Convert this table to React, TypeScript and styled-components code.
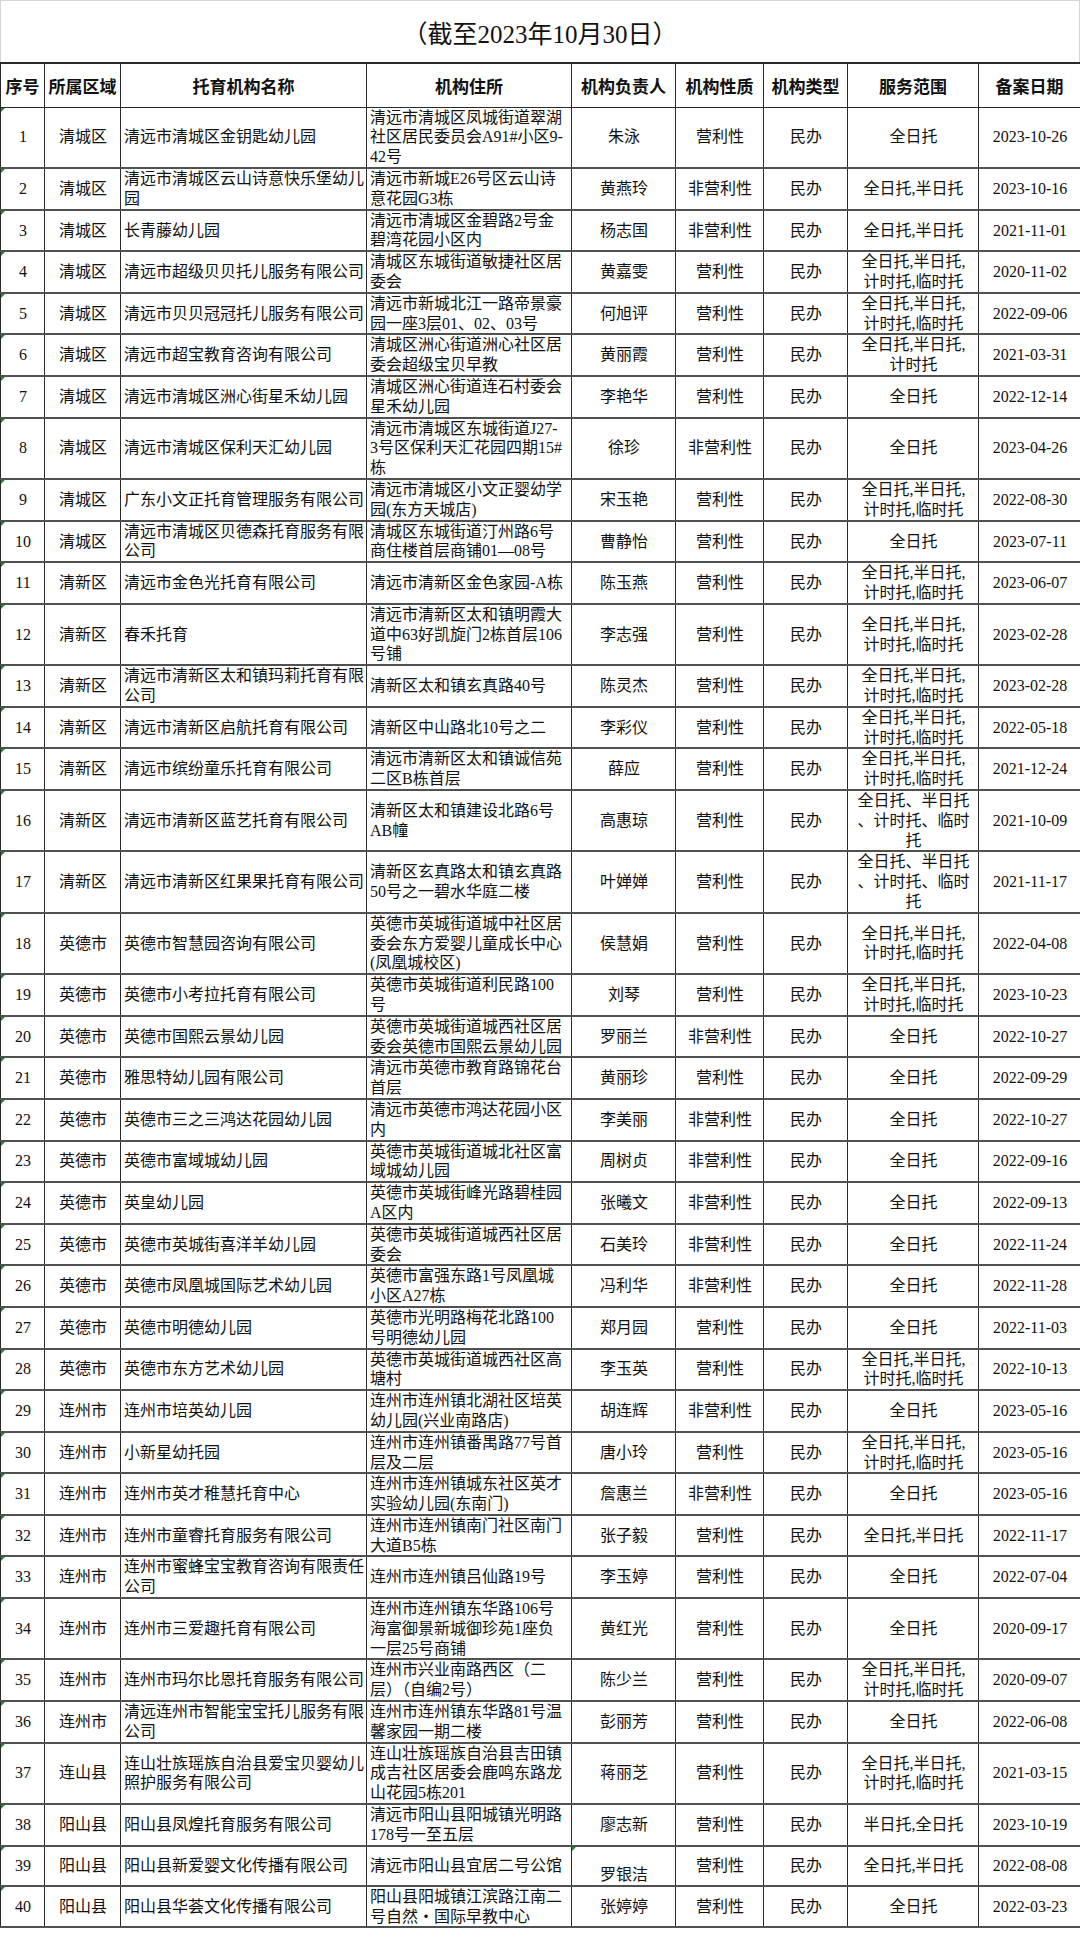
import React from 'react';
import styled, { createGlobalStyle } from 'styled-components';

type Row = [string, string, string, string, string, string, string, string, string];

const FULL = '全日托,半日托,\n计时托,临时托';
const HALF = '全日托,半日托';
const PAUSE = '全日托、半日托\n、计时托、临时\n托';

const rows: Row[] = [
    ['1', '清城区', '清远市清城区金钥匙幼儿园', '清远市清城区凤城街道翠湖\n社区居民委员会A91#小区9-\n42号', '朱泳', '营利性', '民办', '全日托', '2023-10-26'],
    ['2', '清城区', '清远市清城区云山诗意快乐堡幼儿\n园', '清远市新城E26号区云山诗\n意花园G3栋', '黄燕玲', '非营利性', '民办', HALF, '2023-10-16'],
    ['3', '清城区', '长青藤幼儿园', '清远市清城区金碧路2号金\n碧湾花园小区内', '杨志国', '非营利性', '民办', HALF, '2021-11-01'],
    ['4', '清城区', '清远市超级贝贝托儿服务有限公司', '清城区东城街道敏捷社区居\n委会', '黄嘉雯', '营利性', '民办', FULL, '2020-11-02'],
    ['5', '清城区', '清远市贝贝冠冠托儿服务有限公司', '清远市新城北江一路帝景豪\n园一座3层01、02、03号', '何旭评', '营利性', '民办', FULL, '2022-09-06'],
    ['6', '清城区', '清远市超宝教育咨询有限公司', '清城区洲心街道洲心社区居\n委会超级宝贝早教', '黄丽霞', '营利性', '民办', '全日托,半日托,\n计时托', '2021-03-31'],
    ['7', '清城区', '清远市清城区洲心街星禾幼儿园', '清城区洲心街道连石村委会\n星禾幼儿园', '李艳华', '营利性', '民办', '全日托', '2022-12-14'],
    ['8', '清城区', '清远市清城区保利天汇幼儿园', '清远市清城区东城街道J27-\n3号区保利天汇花园四期15#\n栋', '徐珍', '非营利性', '民办', '全日托', '2023-04-26'],
    ['9', '清城区', '广东小文正托育管理服务有限公司', '清远市清城区小文正婴幼学\n园(东方天城店)', '宋玉艳', '营利性', '民办', FULL, '2022-08-30'],
    ['10', '清城区', '清远市清城区贝德森托育服务有限\n公司', '清城区东城街道汀州路6号\n商住楼首层商铺01—08号', '曹静怡', '营利性', '民办', '全日托', '2023-07-11'],
    ['11', '清新区', '清远市金色光托育有限公司', '清远市清新区金色家园-A栋', '陈玉燕', '营利性', '民办', FULL, '2023-06-07'],
    ['12', '清新区', '春禾托育', '清远市清新区太和镇明霞大\n道中63好凯旋门2栋首层106\n号铺', '李志强', '营利性', '民办', FULL, '2023-02-28'],
    ['13', '清新区', '清远市清新区太和镇玛莉托育有限\n公司', '清新区太和镇玄真路40号', '陈灵杰', '营利性', '民办', FULL, '2023-02-28'],
    ['14', '清新区', '清远市清新区启航托育有限公司', '清新区中山路北10号之二', '李彩仪', '营利性', '民办', FULL, '2022-05-18'],
    ['15', '清新区', '清远市缤纷童乐托育有限公司', '清远市清新区太和镇诚信苑\n二区B栋首层', '薛应', '营利性', '民办', FULL, '2021-12-24'],
    ['16', '清新区', '清远市清新区蓝艺托育有限公司', '清新区太和镇建设北路6号\nAB幢', '高惠琼', '营利性', '民办', PAUSE, '2021-10-09'],
    ['17', '清新区', '清远市清新区红果果托育有限公司', '清新区玄真路太和镇玄真路\n50号之一碧水华庭二楼', '叶婵婵', '营利性', '民办', PAUSE, '2021-11-17'],
    ['18', '英德市', '英德市智慧园咨询有限公司', '英德市英城街道城中社区居\n委会东方爱婴儿童成长中心\n(凤凰城校区)', '侯慧娟', '营利性', '民办', FULL, '2022-04-08'],
    ['19', '英德市', '英德市小考拉托育有限公司', '英德市英城街道利民路100\n号', '刘琴', '营利性', '民办', FULL, '2023-10-23'],
    ['20', '英德市', '英德市国熙云景幼儿园', '英德市英城街道城西社区居\n委会英德市国熙云景幼儿园', '罗丽兰', '非营利性', '民办', '全日托', '2022-10-27'],
    ['21', '英德市', '雅思特幼儿园有限公司', '清远市英德市教育路锦花台\n首层', '黄丽珍', '营利性', '民办', '全日托', '2022-09-29'],
    ['22', '英德市', '英德市三之三鸿达花园幼儿园', '清远市英德市鸿达花园小区\n内', '李美丽', '非营利性', '民办', '全日托', '2022-10-27'],
    ['23', '英德市', '英德市富域城幼儿园', '英德市英城街道城北社区富\n域城幼儿园', '周树贞', '非营利性', '民办', '全日托', '2022-09-16'],
    ['24', '英德市', '英皇幼儿园', '英德市英城街峰光路碧桂园\nA区内', '张曦文', '非营利性', '民办', '全日托', '2022-09-13'],
    ['25', '英德市', '英德市英城街喜洋羊幼儿园', '英德市英城街道城西社区居\n委会', '石美玲', '非营利性', '民办', '全日托', '2022-11-24'],
    ['26', '英德市', '英德市凤凰城国际艺术幼儿园', '英德市富强东路1号凤凰城\n小区A27栋', '冯利华', '非营利性', '民办', '全日托', '2022-11-28'],
    ['27', '英德市', '英德市明德幼儿园', '英德市光明路梅花北路100\n号明德幼儿园', '郑月园', '营利性', '民办', '全日托', '2022-11-03'],
    ['28', '英德市', '英德市东方艺术幼儿园', '英德市英城街道城西社区高\n塘村', '李玉英', '营利性', '民办', FULL, '2022-10-13'],
    ['29', '连州市', '连州市培英幼儿园', '连州市连州镇北湖社区培英\n幼儿园(兴业南路店)', '胡连辉', '非营利性', '民办', '全日托', '2023-05-16'],
    ['30', '连州市', '小新星幼托园', '连州市连州镇番禺路77号首\n层及二层', '唐小玲', '营利性', '民办', FULL, '2023-05-16'],
    ['31', '连州市', '连州市英才稚慧托育中心', '连州市连州镇城东社区英才\n实验幼儿园(东南门)', '詹惠兰', '非营利性', '民办', '全日托', '2023-05-16'],
    ['32', '连州市', '连州市童睿托育服务有限公司', '连州市连州镇南门社区南门\n大道B5栋', '张子毅', '营利性', '民办', HALF, '2022-11-17'],
    ['33', '连州市', '连州市蜜蜂宝宝教育咨询有限责任\n公司', '连州市连州镇吕仙路19号', '李玉婷', '营利性', '民办', '全日托', '2022-07-04'],
    ['34', '连州市', '连州市三爱趣托育有限公司', '连州市连州镇东华路106号\n海富御景新城御珍苑1座负\n一层25号商铺', '黄红光', '营利性', '民办', '全日托', '2020-09-17'],
    ['35', '连州市', '连州市玛尔比恩托育服务有限公司', '连州市兴业南路西区（二\n层）（自编2号）', '陈少兰', '营利性', '民办', FULL, '2020-09-07'],
    ['36', '连州市', '清远连州市智能宝宝托儿服务有限\n公司', '连州市连州镇东华路81号温\n馨家园一期二楼', '彭丽芳', '营利性', '民办', '全日托', '2022-06-08'],
    ['37', '连山县', '连山壮族瑶族自治县爱宝贝婴幼儿\n照护服务有限公司', '连山壮族瑶族自治县吉田镇\n成吉社区居委会鹿鸣东路龙\n山花园5栋201', '蒋丽芝', '营利性', '民办', FULL, '2021-03-15'],
    ['38', '阳山县', '阳山县凤煌托育服务有限公司', '清远市阳山县阳城镇光明路\n178号一至五层', '廖志新', '营利性', '民办', '半日托,全日托', '2023-10-19'],
    ['39', '阳山县', '阳山县新爱婴文化传播有限公司', '清远市阳山县宜居二号公馆', '罗银洁', '营利性', '民办', HALF, '2022-08-08'],
    ['40', '阳山县', '阳山县华荟文化传播有限公司', '阳山县阳城镇江滨路江南二\n号自然・国际早教中心', '张婷婷', '营利性', '民办', '全日托', '2022-03-23'],
];

const headers = ['序号', '所属区域', '托育机构名称', '机构住所', '机构负责人', '机构性质', '机构类型', '服务范围', '备案日期'];
const widths = [44, 76, 246, 205, 104, 88, 84, 131, 102];
const leftCols = [2, 3];

const GlobalStyle = createGlobalStyle`
    body {
        margin: 0;
        background: #ffffff;
        font-family: "Liberation Serif", "Noto Sans CJK SC", serif;
        color: #111;
    }
`;

const Page = styled.div`
    width: 1080px;
    background: #fff;
`;

const Caption = styled.div`
    height: 62px;
    box-sizing: border-box;
    display: flex;
    align-items: center;
    justify-content: center;
    border: 1px solid #d6d6d6;
    border-bottom: none;
    font-size: 25px;
    color: #111;
`;

const Sheet = styled.table`
    width: 1080px;
    border-collapse: collapse;
    table-layout: fixed;
`;

const Col = styled.col<{ $w: number }>`
    width: ${({ $w }) => $w}px;
`;

const HeadCell = styled.th`
    height: 42.5px;
    padding: 0;
    border: 1px solid #2a2a2a;
    border-top: 2px solid #2a2a2a;
    font-family: "Noto Sans CJK SC", sans-serif;
    font-size: 17px;
    font-weight: 700;
    text-align: center;
    vertical-align: middle;
    white-space: nowrap;
`;

const BodyRow = styled.tr<{ $tall: boolean }>`
    height: ${({ $tall }) => ($tall ? 61.1 : 40.1)}px;
`;

const Cell = styled.td<{ $left?: boolean; $bottom?: boolean; $mark?: boolean }>`
    position: relative;
    padding: 0 2px 0 3px;
    border-left: 1px solid #2a2a2a;
    border-right: 1px solid #2a2a2a;
    border-bottom: 2px solid #505050;
    font-size: 16px;
    line-height: 19.8px;
    white-space: pre;
    overflow: hidden;
    text-align: ${({ $left }) => ($left ? 'left' : 'center')};
    vertical-align: ${({ $bottom }) => ($bottom ? 'bottom' : 'middle')};

    ${({ $mark }) => $mark && `
        &::before {
            content: '';
            position: absolute;
            top: 0;
            left: 0;
            border-top: 4px solid #1f8a3c;
            border-right: 4px solid transparent;
        }
    `};
`;

const App = () => {
    return (
        <Page>
            <GlobalStyle />
            <Caption>（截至2023年10月30日）</Caption>
            <Sheet>
                <colgroup>
                    {widths.map((w, i) => <Col key={i} $w={w} />)}
                </colgroup>
                <thead>
                    <tr>
                        {headers.map((h) => <HeadCell key={h}>{h}</HeadCell>)}
                    </tr>
                </thead>
                <tbody>
                    {rows.map((row) => {
                        const tall = row.some((c) => c.split('\n').length > 2);
                        const odd = row[0] === '39';
                        return (
                            <BodyRow key={row[0]} $tall={tall}>
                                {row.map((c, i) => (
                                    <Cell
                                        key={i}
                                        $left={leftCols.includes(i)}
                                        $mark={i === 0 || (odd && i === 4)}
                                        $bottom={odd && i === 4}
                                    >
                                        {c}
                                    </Cell>
                                ))}
                            </BodyRow>
                        );
                    })}
                </tbody>
            </Sheet>
        </Page>
    );
};

export default App;
